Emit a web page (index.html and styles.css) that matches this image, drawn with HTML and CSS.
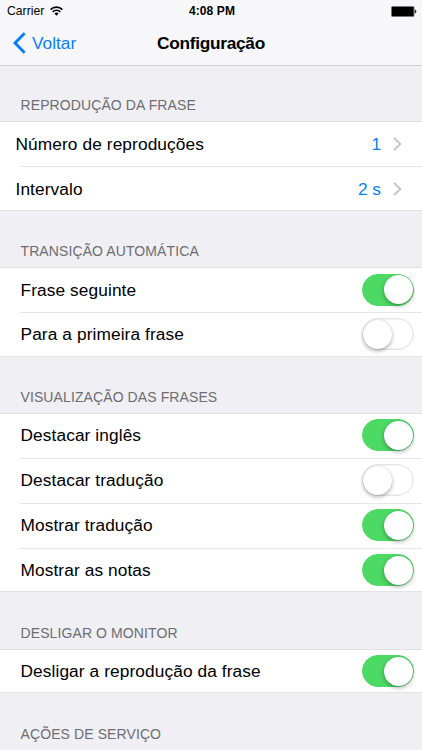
FILE: index.html
```
<!DOCTYPE html>
<html lang="pt">
<head>
<meta charset="utf-8">
<title>Configuração</title>
<link rel="stylesheet" href="styles.css">
</head>
<body>
<header class="top">
  <div class="status">
    <div class="carrier"><span class="carrier-name">Carrier</span>
      <svg class="wifi" width="13" height="10" viewBox="0 0 13 10" fill="none" stroke="#000" stroke-width="1.6"><path d="M.6 3.600a8.300 8.300 0 0 1 11.800 0M2.700 5.900a5.300 5.300 0 0 1 7.600 0"/><path d="M6.500 9.700 4.400 7.500a3 3 0 0 1 4.200 0z" fill="#000" stroke="none"/></svg>
    </div>
    <div class="time">4:08 PM</div>
    <svg class="battery" width="26" height="11" viewBox="0 0 26 11"><rect x=".5" y=".5" width="22.5" height="10" rx="1" fill="#000" stroke="#777"/><path d="M23.7 3.8h.8q.8 0 .8 1.7t-.8 1.7h-.8z" fill="#333"/></svg>
  </div>
  <nav class="nav">
    <a class="back"><svg width="13" height="22" viewBox="0 0 13 22" fill="none" stroke="#087ffa" stroke-width="3"><path d="M11.6 1.2 2 11l9.600 9.800"/></svg><span>Voltar</span></a>
    <h1 class="title">Configuração</h1>
  </nav>
</header>
<main>
  <h2 class="heading first">REPRODUÇÃO DA FRASE</h2>
  <section class="group">
    <div class="row link"><span class="label">Número de reproduções</span><span class="value">1</span><svg class="chev" width="9" height="14" viewBox="0 0 9 14"><path d="m1 .9 6.300 6.100L1 13.100"/></svg></div>
    <div class="row link"><span class="label">Intervalo</span><span class="value">2 s</span><svg class="chev" width="9" height="14" viewBox="0 0 9 14"><path d="m1 .9 6.300 6.100L1 13.100"/></svg></div>
  </section>
  <h2 class="heading">TRANSIÇÃO AUTOMÁTICA</h2>
  <section class="group">
    <div class="row"><span class="label">Frase seguinte</span><span class="switch on"></span></div>
    <div class="row"><span class="label">Para a primeira frase</span><span class="switch"></span></div>
  </section>
  <h2 class="heading">VISUALIZAÇÃO DAS FRASES</h2>
  <section class="group">
    <div class="row"><span class="label">Destacar inglês</span><span class="switch on"></span></div>
    <div class="row"><span class="label">Destacar tradução</span><span class="switch"></span></div>
    <div class="row"><span class="label">Mostrar tradução</span><span class="switch on"></span></div>
    <div class="row"><span class="label">Mostrar as notas</span><span class="switch on"></span></div>
  </section>
  <h2 class="heading">DESLIGAR O MONITOR</h2>
  <section class="group">
    <div class="row"><span class="label">Desligar a reprodução da frase</span><span class="switch on"></span></div>
  </section>
  <h2 class="heading">AÇÕES DE SERVIÇO</h2>
</main>
</body>
</html>
```
FILE: styles.css
```
* { box-sizing: border-box; }
body {
  margin: 0;
  height: 750px;
  overflow: hidden;
  background: #efeff4;
  color: #000;
  font-family: "Liberation Sans", Arial, sans-serif;
  font-size: 17.3px;
}
.top {
  height: 66px;
  background: #f7f7f9;
  border-bottom: 1px solid #cfcfd6;
}
.status {
  display: grid;
  grid-template-columns: 1fr auto 1fr;
  align-items: center;
  height: 21px;
  padding: 1px 5px 0 7px;
  font-size: 12.2px;
}
.carrier { display: flex; align-items: center; gap: 6px; }
.wifi { margin-top: -1px; }
.time { font-weight: 700; font-size: 12px; letter-spacing: .1px; }
.battery { justify-self: end; }
.nav {
  display: grid;
  grid-template-columns: 1fr auto 1fr;
  align-items: center;
  height: 44px;
}
.back {
  display: flex;
  align-items: center;
  gap: 6px;
  padding-left: 13px;
  color: #087ffa;
}
.title { margin: 0; font-size: 17.3px; font-weight: 700; letter-spacing: -.3px; }
.heading {
  display: flex;
  align-items: flex-end;
  height: 56.2px;
  margin: 0;
  padding: 0 0 8px 20.5px;
  color: #6d6d72;
  font-size: 14px;
  font-weight: 400;
  line-height: 16px;
  letter-spacing: .1px;
}
.first { height: 55.3px; }
.group {
  background: #fff;
  box-shadow: inset 0 1px #dfdfe4, inset 0 -1px #e2e2e7;
}
.row {
  position: relative;
  display: flex;
  align-items: center;
  height: 44.85px;
  padding: 0 8.5px 0 20.5px;
}
.row + .row::before {
  content: "";
  position: absolute;
  top: 0;
  left: 20px;
  right: 0;
  height: 1px;
  background: #e6e6e9;
}
.link { padding-left: 15.5px; padding-right: 20px; }
.label { flex: 1; padding-top: 1px; letter-spacing: .1px; }
.value { padding-top: 1px; margin-right: 12px; color: #087ffa; }
.chev { fill: none; stroke: #c4c4c9; stroke-width: 2; }
.switch {
  position: relative;
  width: 52px;
  height: 32px;
  border: 1.5px solid #e4e4e6;
  border-radius: 16px;
  background: #fff;
  box-shadow: inset 0 0 0 .5px #e9e9eb;
}
.switch::after {
  content: "";
  position: absolute;
  top: .5px;
  left: 0;
  width: 29px;
  height: 29px;
  border-radius: 50%;
  background: #fff;
  box-shadow: 0 2px 4px rgba(0,0,0,.3), 0 0 1px rgba(0,0,0,.18);
}
.on { background: #4cd964; border-color: #4cd964; box-shadow: none; }
.on::after { left: auto; right: 0; }
```
